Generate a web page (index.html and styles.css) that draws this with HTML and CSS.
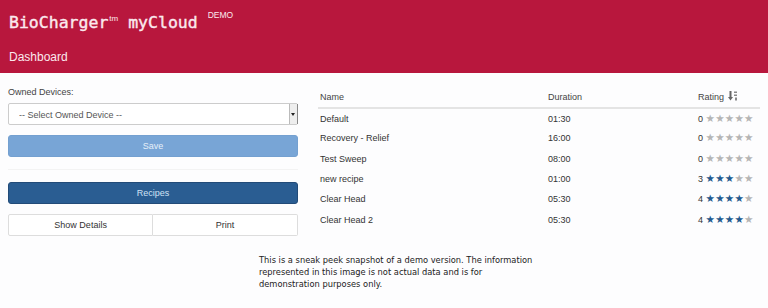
FILE: index.html
```html
<!DOCTYPE html>
<html lang="en">

<head>
    <meta charset="UTF-8">
    <meta name="viewport" content="width=device-width, initial-scale=1.0">
    <title>BioCharger mycloud - Dashboard</title>
    <link rel="stylesheet" href="styles.css">
</head>

<body>
    <header class="top-bar">
        <div class="brand">BioCharger<sup class="tm">tm</sup> myCloud <sup class="demo">DEMO</sup></div>
        <div class="page-title">Dashboard</div>
    </header>

    <main class="dashboard">
        <section class="side">
            <label for="device">Owned Devices:</label>
            <div class="select-box">
                <select id="device">
                    <option>-- Select Owned Device --</option>
                </select>
                <span class="select-arrow"></span>
            </div>
            <button type="button" class="btn btn-save" disabled>Save</button>
            <hr>
            <button type="button" class="btn btn-recipes">Recipes</button>
            <div class="btn-pair">
                <button type="button" class="btn btn-plain">Show Details</button>
                <button type="button" class="btn btn-plain">Print</button>
            </div>
        </section>

        <section class="recipes">
            <table>
                <thead>
                    <tr>
                        <th class="col-name">Name</th>
                        <th class="col-time">Duration</th>
                        <th class="col-rating">Rating
                            <svg class="sort-icon" width="10" height="10" viewBox="0 0 10 10">
                                <rect x="1.5" y="0" width="2" height="7" fill="#666" />
                                <polygon points="0,6 5,6 2.5,9.5" fill="#666" />
                                <rect x="6" y="0.5" width="3" height="1.5" fill="#888" />
                                <rect x="6" y="3.5" width="3" height="1.5" fill="#888" />
                                <rect x="7" y="6.5" width="2" height="3" fill="#888" />
                            </svg>
                        </th>
                    </tr>
                </thead>
                <tbody id="recipeRows"></tbody>
            </table>
        </section>
    </main>

    <p class="notice">This is a sneak peek snapshot of a demo version. The information<br>
        represented in this image is not actual data and is for<br>
        demonstration purposes only.</p>

    <script>
        const recipes = [
            { name: 'Default', time: '01:30', rating: 0 },
            { name: 'Recovery - Relief', time: '16:00', rating: 0 },
            { name: 'Test Sweep', time: '08:00', rating: 0 },
            { name: 'new recipe', time: '01:00', rating: 3 },
            { name: 'Clear Head', time: '05:30', rating: 4 },
            { name: 'Clear Head 2', time: '05:30', rating: 4 }
        ];

        const tbody = document.getElementById('recipeRows');

        recipes.forEach(r => {
            let stars = '';
            for (let i = 0; i < 5; i++) {
                stars += `<span class="star${i < r.rating ? ' on' : ''}">★</span>`;
            }
            const row = document.createElement('tr');
            row.innerHTML = `<td>${r.name}</td><td>${r.time}</td><td>${r.rating} <span class="stars">${stars}</span></td>`;
            tbody.appendChild(row);
        });
    </script>
</body>

</html>
```

FILE: styles.css
```css
body {
    margin: 0;
    background-color: #fdfdfe;
    font-family: "Liberation Sans", Arial, sans-serif;
    color: #333;
}

.top-bar {
    background-color: #b8173d;
    color: #fbe9ee;
    height: 73px;
    padding: 0 9px;
    box-sizing: border-box;
}

.brand {
    font-family: "DejaVu Sans Mono", monospace;
    font-size: 16.5px;
    -webkit-text-stroke: 0.4px #fbe9ee;
    padding-top: 13px;
    line-height: 20px;
}

.brand sup {
    font-family: "Liberation Sans", Arial, sans-serif;
    -webkit-text-stroke: 0;
    line-height: 0;
}

.tm {
    font-size: 8px;
    vertical-align: 7px;
    margin-left: 1px;
}

.demo {
    font-size: 8.5px;
    vertical-align: 10px;
}

.page-title {
    font-size: 12px;
    line-height: 14px;
    margin-top: 17px;
}

.dashboard {
    display: grid;
    grid-template-columns: 290px 1fr;
    gap: 20px;
    padding: 0 8px;
}

.side {
    display: flex;
    flex-direction: column;
    padding-top: 13px;
}

label {
    font-size: 9px;
    color: #444;
    line-height: 12px;
    margin-bottom: 5px;
}

.select-box {
    position: relative;
    height: 22px;
    border: 1px solid #ccc;
    border-radius: 2px;
    box-sizing: border-box;
    background: #fff;
}

.select-box select {
    width: 100%;
    height: 100%;
    border: none;
    background: transparent;
    font-family: inherit;
    font-size: 9px;
    color: #555;
    padding-left: 10px;
    appearance: none;
    -webkit-appearance: none;
}

.select-arrow {
    position: absolute;
    right: 0;
    top: 0;
    bottom: 0;
    width: 7px;
    border-left: 1px solid #bbb;
    background: #eee;
    box-shadow: 1px 0 0 #888;
}

.select-arrow::after {
    content: "";
    position: absolute;
    left: 1px;
    top: 9px;
    border-left: 2.5px solid transparent;
    border-right: 2.5px solid transparent;
    border-top: 3px solid #222;
}

.btn {
    width: 100%;
    height: 22px;
    border-radius: 3px;
    font-family: inherit;
    font-size: 9px;
    padding: 0;
    cursor: pointer;
}

.btn-save {
    margin-top: 10px;
    background-color: #78a5d6;
    border: 1px solid #74a0d0;
    color: #e6eff9;
}

hr {
    width: 100%;
    margin: 12px 0 12px;
    border: none;
    border-top: 1px solid #f3f3f3;
}

.btn-recipes {
    background-color: #2a5d92;
    border: 1px solid #224b78;
    color: #cfe2f5;
}

.btn-pair {
    display: flex;
    margin-top: 10px;
}

.btn-plain {
    background: #fff;
    border: 1px solid #ddd;
    color: #333;
    border-radius: 0;
}

.btn-pair .btn-plain:first-child {
    border-radius: 2px 0 0 2px;
}

.btn-pair .btn-plain:last-child {
    border-left: none;
    border-radius: 0 2px 2px 0;
}

table {
    width: 100%;
    border-collapse: collapse;
    font-size: 9px;
    margin-top: 12px;
}

th {
    font-weight: normal;
    text-align: left;
    color: #444;
    padding: 6px 2px 4px;
    border-bottom: 2px solid #e4e4e4;
    line-height: 12px;
}

.col-name {
    width: 224px;
}

.col-time {
    width: 146px;
}

.sort-icon {
    vertical-align: -1px;
    margin-left: 1px;
}

td {
    height: 20.4px;
    padding: 0 2px;
    line-height: 12px;
    color: #333;
}

tbody tr:first-child td {
    height: 19px;
}

.stars {
    font-family: "DejaVu Sans", sans-serif;
    font-size: 10.5px;
    line-height: 0;
    letter-spacing: 0.2px;
}

.star {
    color: #b5b5b5;
}

.star.on {
    color: #245a8e;
}

.notice {
    font-family: "DejaVu Sans", sans-serif;
    font-size: 8.3px;
    line-height: 12px;
    color: #222;
    margin: 18px 0 0 259px;
}
```
